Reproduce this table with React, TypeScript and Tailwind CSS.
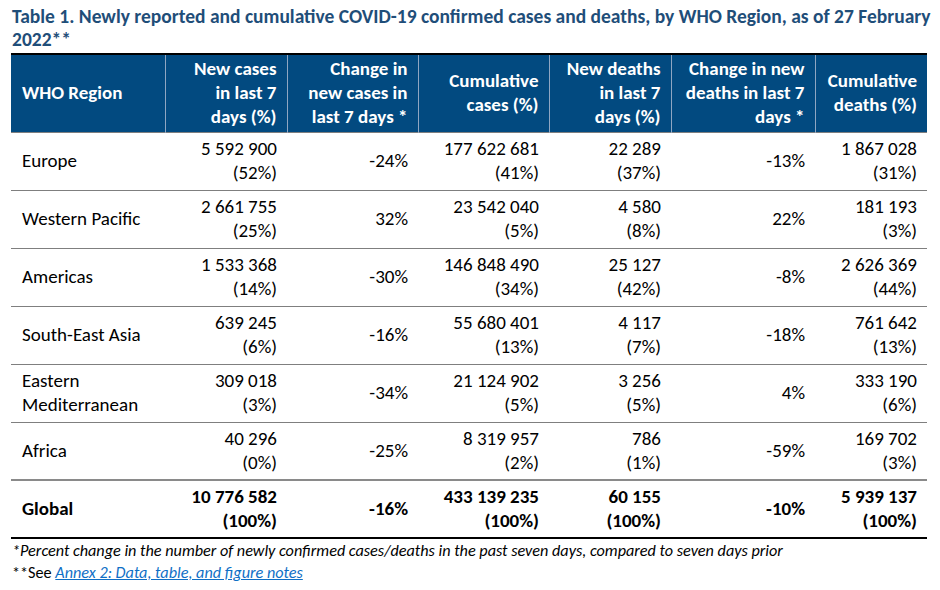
import React from "react";

type Row = {
  region: string[];
  newCases: [string, string];
  changeCases: string;
  cumCases: [string, string];
  newDeaths: [string, string];
  changeDeaths: string;
  cumDeaths: [string, string];
  bold?: boolean;
};

const rows: Row[] = [
  { region: ["Europe"], newCases: ["5 592 900", "(52%)"], changeCases: "-24%", cumCases: ["177 622 681", "(41%)"], newDeaths: ["22 289", "(37%)"], changeDeaths: "-13%", cumDeaths: ["1 867 028", "(31%)"] },
  { region: ["Western Pacific"], newCases: ["2 661 755", "(25%)"], changeCases: "32%", cumCases: ["23 542 040", "(5%)"], newDeaths: ["4 580", "(8%)"], changeDeaths: "22%", cumDeaths: ["181 193", "(3%)"] },
  { region: ["Americas"], newCases: ["1 533 368", "(14%)"], changeCases: "-30%", cumCases: ["146 848 490", "(34%)"], newDeaths: ["25 127", "(42%)"], changeDeaths: "-8%", cumDeaths: ["2 626 369", "(44%)"] },
  { region: ["South-East Asia"], newCases: ["639 245", "(6%)"], changeCases: "-16%", cumCases: ["55 680 401", "(13%)"], newDeaths: ["4 117", "(7%)"], changeDeaths: "-18%", cumDeaths: ["761 642", "(13%)"] },
  { region: ["Eastern", "Mediterranean"], newCases: ["309 018", "(3%)"], changeCases: "-34%", cumCases: ["21 124 902", "(5%)"], newDeaths: ["3 256", "(5%)"], changeDeaths: "4%", cumDeaths: ["333 190", "(6%)"] },
  { region: ["Africa"], newCases: ["40 296", "(0%)"], changeCases: "-25%", cumCases: ["8 319 957", "(2%)"], newDeaths: ["786", "(1%)"], changeDeaths: "-59%", cumDeaths: ["169 702", "(3%)"] },
];

const globalRow: Row = { region: ["Global"], newCases: ["10 776 582", "(100%)"], changeCases: "-16%", cumCases: ["433 139 235", "(100%)"], newDeaths: ["60 155", "(100%)"], changeDeaths: "-10%", cumDeaths: ["5 939 137", "(100%)"], bold: true };

const widths = ["w-[154px]", "w-[122px]", "w-[131px]", "w-[131px]", "w-[122px]", "w-[144px]", "w-[112px]"];

function Two({ v }: { v: [string, string] }) {
  return (
    <div className="flex flex-col items-end">
      <span>{v[0]}</span>
      <span>{v[1]}</span>
    </div>
  );
}

function BodyRow({ r, last }: { r: Row; last?: boolean }) {
  const border = r.bold ? "border-t-2 border-[#8a8a8a]" : "border-t border-[#7f7f7f]";
  const cell = `${border} pr-[10px] text-right align-middle`;
  return (
    <tr className={`h-[58px] ${r.bold ? "font-bold" : ""} ${last ? "border-b-2 border-black" : ""}`}>
      <td className={`${border} pl-[11px] text-left align-middle`}>
        {r.region.map((t) => (
          <div key={t}>{t}</div>
        ))}
      </td>
      <td className={cell}><Two v={r.newCases} /></td>
      <td className={cell}>{r.changeCases}</td>
      <td className={cell}><Two v={r.cumCases} /></td>
      <td className={cell}><Two v={r.newDeaths} /></td>
      <td className={cell}>{r.changeDeaths}</td>
      <td className={cell}><Two v={r.cumDeaths} /></td>
    </tr>
  );
}

export default function App() {
  const hd = "border-l border-[#8fa6c2] pr-[10px] text-right align-middle font-bold";
  return (
    <div
      className="w-[940px] h-[590px] bg-white text-black overflow-hidden"
      style={{ fontFamily: "Carlito, Lato, 'Open Sans', sans-serif" }}
    >
      <div className="pl-[12px] pt-[5px] text-[19.5px] leading-[23px] font-bold text-[#1f4e79] whitespace-nowrap">
        Table 1. Newly reported and cumulative COVID-19 confirmed cases and deaths, by WHO Region, as of 27 February
        <br />
        2022**
      </div>
      <table className="ml-[11px] mt-[2px] w-[916px] table-fixed border-collapse text-[19px] leading-[24px]">
        <colgroup>
          {widths.map((w, i) => (
            <col key={i} className={w} />
          ))}
        </colgroup>
        <thead>
          <tr className="h-[78px] bg-[#024a80] text-white border-t-2 border-black border-b border-[#0b2f50]">
            <th className="pl-[11px] text-left align-middle font-bold">WHO Region</th>
            <th className={hd}>New cases<br />in last 7<br />days (%)</th>
            <th className={hd}>Change in<br />new cases in<br />last 7 days *</th>
            <th className={hd}>Cumulative<br />cases (%)</th>
            <th className={hd}>New deaths<br />in last 7<br />days (%)</th>
            <th className={hd}>Change in new<br />deaths in last 7<br />days *</th>
            <th className={hd}>Cumulative<br />deaths (%)</th>
          </tr>
        </thead>
        <tbody>
          {rows.map((r, i) => (
            <BodyRow key={i} r={r} />
          ))}
          <BodyRow r={globalRow} last />
        </tbody>
      </table>
      <div className="pl-[12px] pt-[1px] text-[16.2px] leading-[22px]">
        <div className="italic">*Percent change in the number of newly confirmed cases/deaths in the past seven days, compared to seven days prior</div>
        <div>
          **See{" "}
          <span className="italic underline text-[#0f6fc6]">Annex 2: Data, table, and figure notes</span>
        </div>
      </div>
    </div>
  );
}
